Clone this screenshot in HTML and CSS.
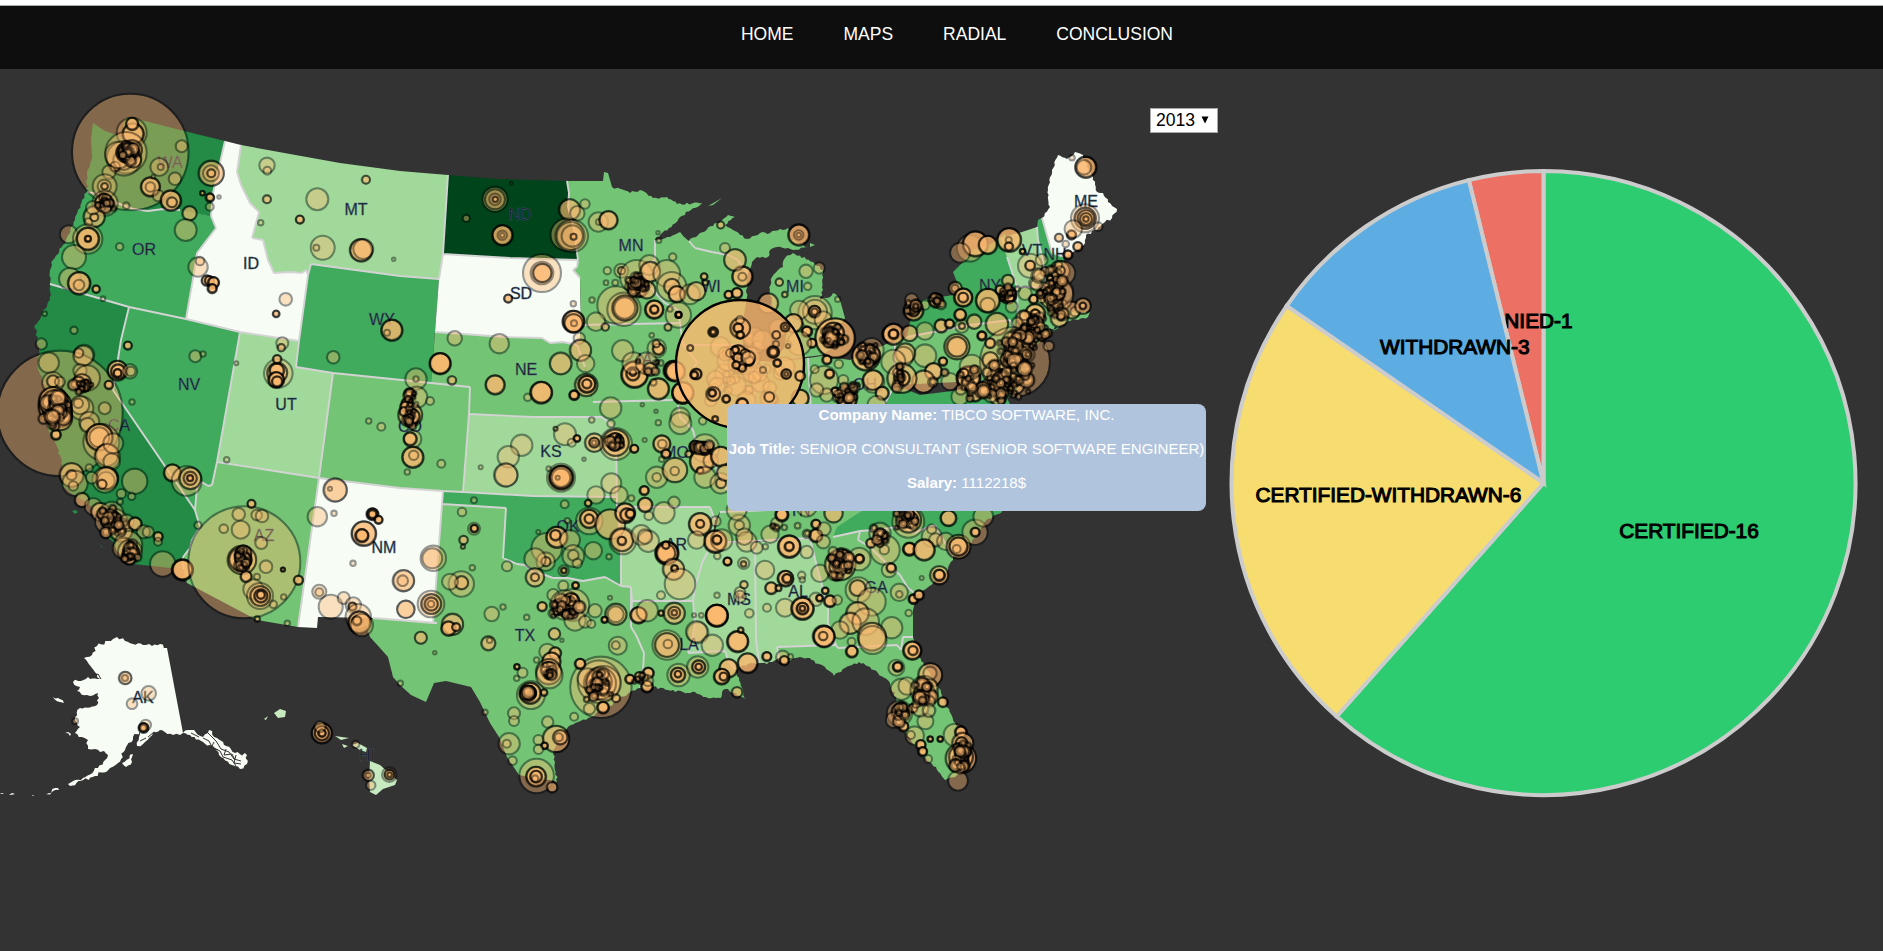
FILE: index.html
```html
<!DOCTYPE html>
<html lang="en">
<head>
<meta charset="utf-8">
<title>Maps</title>
<link rel="stylesheet" href="styles.css">
</head>
<body>
<header class="topbar">
  <nav class="nav"><a>HOME</a><a>MAPS</a><a>RADIAL</a><a>CONCLUSION</a></nav>
</header>
<main class="content">
  <svg class="map" viewBox="0 69 1150 882" width="1150" height="882">
    <g id="states" class="states"></g>
    <g id="labels" class="labels"></g>
    <g id="circles" class="circles"></g>
    <g id="active"></g>
  </svg>
  <div class="picker"><div class="select"><span>2013</span><svg width="8" height="8" viewBox="0 0 8 8"><path d="M0.5 0.5h7L4 7.5z"/></svg></div></div>
  <svg class="pie" viewBox="1218 69 665 882" width="665" height="882">
    <path class="slice" fill="#2ecc71" d="M1543.5 483V171A312 312 0 1 1 1336.6 716.5Z"/>
    <text x="1689" y="537.5">CERTIFIED-16</text>
    <path class="slice" fill="#ec7063" d="M1543.5 483L1468.8 180.1A312 312 0 0 1 1543.5 171Z"/>
    <text x="1524" y="328">DENIED-1</text>
    <path class="slice" fill="#f7dc6f" d="M1543.5 483L1336.6 716.5A312 312 0 0 1 1286.7 305.8Z"/>
    <path class="slice" fill="#5dade2" d="M1543.5 483L1286.7 305.8A312 312 0 0 1 1468.8 180.1Z"/>
    <text x="1388.4" y="502">CERTIFIED-WITHDRAWN-6</text>
    <text x="1454.8" y="354">WITHDRAWN-3</text>
  </svg>
  <div class="tooltip">
    <p><strong>Company Name:</strong> TIBCO SOFTWARE, INC.</p>
    <p><strong>Job Title:</strong> SENIOR CONSULTANT (SENIOR SOFTWARE ENGINEER)</p>
    <p><strong>Salary:</strong> 1112218$</p>
  </div>
</main>
<script src="map.js"></script>
</body>
</html>
```
FILE: styles.css
```css
* { box-sizing: border-box; }
body {
  margin: 0;
  padding-top: 5px;
  height: 951px;
  overflow: hidden;
  background: #fff;
  font-family: "Liberation Sans", Arial, sans-serif;
}
.topbar {
  height: 64px;
  background: #0e0e0e;
  border-top: 1px solid #a3aca6;
  padding: 18px 0 0 31px;
}
.nav {
  display: flex;
  justify-content: center;
  gap: 50px;
  font-size: 17.5px;
  line-height: 20px;
  color: #fff;
}
.content {
  position: relative;
  display: grid;
  grid-template-columns: 1150px 68px 665px;
  height: 882px;
  background: #333;
}
.map, .pie { display: block; }
.picker { padding-top: 39px; }
.select {
  display: flex;
  align-items: center;
  justify-content: space-between;
  height: 25px;
  padding: 0 8px 1px 5px;
  border: 1px solid #a9a9a9;
  background: #fff;
  color: #000;
  font-size: 17.6px;
}
.states path { stroke: none; }
.states .border { fill: none; stroke: #d3d3d3; stroke-width: 1.9; stroke-linejoin: round; }
.states .channel { fill: none; stroke: #333; stroke-width: 1; }
.labels { font-size: 16px; text-anchor: middle; fill: #10141c; stroke: #45607c; stroke-width: .45; }
.circles circle { fill: #fdb96f; stroke: #000; stroke-width: 2.1; opacity: .4; }
.circles .dense { stroke-width: 2.4; opacity: .44; }
.active { fill: #fdb96f; stroke: #000; stroke-width: 2.4; fill-opacity: .8; }
.slice { stroke: #ccc; stroke-width: 4; }
.pie text { font-size: 20.8px; text-anchor: middle; fill: #000; stroke: #000; stroke-width: 1.1; }
.tooltip {
  position: absolute;
  left: 727px;
  top: 335px;
  width: 479px;
  height: 107px;
  border-radius: 8px;
  background: #b0c4de;
  color: #fff;
  font-size: 15.06px;
  line-height: 17px;
  text-align: center;
  white-space: nowrap;
}
.tooltip p { margin: 2px 0 17px; }
.tooltip p + p { margin-top: 0; }
```
FILE: map.js
```js
const NS = 'http://www.w3.org/2000/svg';
const C = { w: '#f7fcf5', a: '#c7e9c0', b: '#a1d99b', c: '#74c476', d: '#41ab5d', e: '#238b45', f: '#00441b' };

// State outlines: shade key, then polygon points.
const states = [
  ['e', '93,123 105,131 117,135 121,138 125,118 133,118 188,132 225,141 213,193 211,216 197,214 180,210 163,209 148,211 133,209 117,203 103,195 87,192 87,173 92,157 91,140 92,130'],
  ['d', '87,192 103,195 117,203 133,209 148,211 163,209 180,210 211,216 216,228 197,253 194,273 186,319 129,307 50,284 50,270 53,260 63,245 75,220 82,200'],
  ['w', '225,141 241,145 237,172 241,185 250,203 259,212 255,227 252,238 263,240 268,260 274,273 290,272 302,273 306,270 308,275 299,341 240,332 186,319 194,273 197,253 216,228 211,216 213,193'],
  ['b', '241,145 290,154 340,163 400,171 448,175 443,254 439,279 400,276 311,264 308,275 306,270 302,273 290,272 274,273 268,260 263,240 252,238 255,227 259,212 250,203 241,185 237,172'],
  ['d', '311,264 400,276 439,279 431,383 333,373 296,367 299,341 308,275'],
  ['f', '448,175 497,179 567,181 569,193 568,207 575,233 576,245 578,260 510,258 443,254'],
  ['w', '443,254 510,258 578,260 577,267 573,270 580,278 581,323 580,337 577,345 563,342 550,343 542,338 505,337 435,332 439,279'],
  ['c', '435,332 505,337 542,338 550,343 563,342 577,345 585,367 592,398 602,417 533,417 469,414 470,387 431,383'],
  ['b', '469,414 533,417 602,417 612,425 612,430 616,433 617,497 533,496 463,492'],
  ['c', '333,373 431,383 470,387 469,414 463,492 443,491 400,488 319,478'],
  ['b', '240,332 299,341 296,367 333,373 319,478 217,462'],
  ['d', '129,307 186,319 240,332 217,462 212,485 208,486 202,482 197,487 195,510 113,390 121,340'],
  ['e', '50,284 129,307 121,340 113,390 195,510 200,527 192,540 190,548 183,557 185,562 180,569 133,564 120,555 105,530 92,507 63,487 62,460 50,433 40,400 47,390 38,370 39,350 35,325 50,300'],
  ['c', '217,462 319,478 298,627 257,620 187,583 183,569 183,557 190,548 192,540 200,527 195,510 197,487 202,482 208,486 212,485'],
  ['w', '319,478 400,488 443,491 442,504 433,623 373,618 318,617 317,628 298,627'],
  ['c', '442,504 506,508 503,558 517,564 525,565 533,572 545,575 553,578 568,578 583,581 605,577 621,586 631,587 632,601 631,627 636,635 644,653 643,670 640,688 630,692 610,706 591,717 578,722 568,727 557,740 553,754 555,762 557,782 549,780 535,778 519,775 507,757 499,737 490,723 480,702 471,687 446,681 434,683 426,702 411,695 400,685 393,677 388,657 380,648 370,637 366,625 373,618 433,623'],
  ['d', '443,491 463,492 533,496 617,497 617,507 621,543 621,586 605,577 583,581 568,578 553,578 545,575 533,572 525,565 517,564 503,558 506,508 442,504'],
  ['c', '567,181 603,181 604,172 608,173 612,187 630,193 640,190 653,198 667,197 677,204 702,203 680,217 669,228 655,240 655,260 645,265 648,285 665,303 678,310 680,323 581,325 580,278 573,270 577,267 578,260 576,245 575,233 568,207 569,193'],
  ['c', '655,240 670,237 680,232 689,241 695,248 712,252 728,255 738,260 742,267 748,273 747,297 744,315 743,345 683,345 680,323 678,310 665,303 648,285 645,265 655,260'],
  ['c', '689,241 700,233 717,223 728,215 735,217 725,225 733,230 747,239 760,233 770,233 788,228 791,240 798,243 807,247 793,250 777,247 770,250 768,257 757,257 752,262 748,273 742,267 738,260 728,255 712,252 695,248'],
  ['c', '793,253 813,262 823,270 823,290 820,300 827,298 833,293 840,300 845,318 838,328 834,347 822,355 806,357 773,362 784,348 787,330 783,315 771,305 770,290 772,277 778,270 783,267 785,258'],
  ['c', '581,325 680,323 683,345 697,362 688,380 678,403 673,400 593,402 585,367 577,345 580,337'],
  ['c', '593,402 673,400 678,405 680,417 693,430 697,446 712,460 727,490 727,502 720,512 715,520 710,507 617,507 616,433 612,430 612,425 602,417'],
  ['c', '683,345 743,345 752,360 756,430 745,470 727,490 712,460 697,446 693,430 680,417 678,405 688,380 697,362'],
  ['c', '752,360 773,362 808,358 812,430 780,460 745,470 756,430'],
  ['c', '808,358 822,356 850,360 880,347 895,340 895,385 870,430 840,440 812,430'],
  ['c', '727,490 745,470 780,460 812,430 840,440 860,470 900,505 720,512'],
  ['c', '720,512 900,505 860,531 833,537 712,543'],
  ['b', '617,507 710,507 715,520 712,543 702,563 695,587 693,601 632,601 631,587 621,586 621,543'],
  ['c', '632,601 693,601 695,623 692,640 688,653 725,651 728,660 735,670 739,678 742,688 746,700 737,695 728,689 723,690 721,698 706,697 695,692 683,692 668,690 653,687 640,688 643,670 644,653 636,635 631,627'],
  ['b', '712,543 755,542 756,640 759,663 748,664 735,670 728,660 725,651 688,653 692,640 695,623 693,601 695,587 702,563'],
  ['b', '755,542 810,538 817,567 828,607 828,623 836,645 777,647 779,658 767,664 759,663 756,640'],
  ['c', '810,538 860,531 858,540 870,547 883,560 900,575 908,588 917,595 913,610 913,637 903,637 901,650 897,645 838,648 836,645 828,623 828,607 817,567'],
  ['c', '777,647 836,645 838,648 897,645 901,650 903,637 913,637 919,657 930,673 941,693 955,723 966,747 966,763 955,777 945,780 936,767 924,757 909,737 901,727 894,717 897,703 890,683 874,670 859,662 845,668 834,676 825,667 807,658 795,658 783,663 779,658'],
  ['c', '860,531 875,530 905,526 913,533 935,525 953,557 948,570 935,580 927,588 917,595 908,588 900,575 883,560 870,547 858,540'],
  ['d', '833,537 837,527 860,512 880,500 1000,500 1002,512 985,522 975,538 965,548 953,557 935,525 913,533 905,526 875,530 860,531'],
  ['d', '895,385 920,395 1000,385 1010,404 1000,450 1005,500 900,505 860,470 840,440 870,430'],
  ['c', '895,340 907,337 970,325 1010,320 1020,340 1015,365 1000,380 895,385'],
  ['d', '907,337 910,322 923,300 953,295 960,290 953,272 963,262 973,250 993,243 1005,233 1007,257 1017,287 1018,325 1030,340 1055,330 1060,325 1035,345 1020,340 1010,320 970,325'],
  ['d', '1020,340 1030,345 1028,370 1018,390 1000,404 1000,380 1015,365'],
  ['b', '1000,238 1022,232 1037,227 1038,240 1043,260 1046,287 1017,287 1007,257'],
  ['d', '1037,227 1038,220 1042,218 1052,253 1065,257 1060,285 1046,287 1043,260 1038,240'],
  ['c', '1017,287 1046,287 1060,285 1062,300 1072,312 1090,312 1088,317 1068,321 1040,335 1030,338 1018,325'],
  ['w', '1042,218 1050,207 1048,190 1052,170 1058,155 1067,159 1075,152 1083,155 1093,177 1097,192 1103,193 1108,202 1117,209 1112,218 1105,222 1097,230 1086,235 1085,243 1073,252 1065,257 1052,253']
];
// Outlying land without visible borders.
const islands = [
  ['c', '708,206 722,198 713,205'], ['c', '810,243 815,245 810,247'], ['e', '72,511 78,512 75,514'], ['e', '100,544 103,549'], ['d', '1055,330 1064,323 1049,334'],
  ['w', '108,641 113,639 117,637 125,641 133,644 143,645 152,646 160,644 167,648 183,733 180,735 173,735 160,730 153,733 150,737 145,742 137,746 139,737 140,731 133,737 125,750 118,763 110,768 95,776 70,786 68,784 83,778 98,768 108,755 104,751 100,752 95,749 88,749 88,740 82,737 75,733 80,727 75,720 80,708 97,705 98,693 87,695 77,691 80,687 73,682 88,677 100,679 97,674 92,668 84,658 92,655 97,646'],
  ['w', '183,733 191,730 203,737 209,730 217,738 226,746 235,753 247,755 247,764 240,769 232,765 219,755 210,745 203,742 190,735'],
  ['w', '53,697 58,698 64,703 60,702'], ['w', '65,733 71,734 70,736'], ['w', '122,763 133,754 132,762 126,767'], ['w', '43,795 58,788 59,790 45,795'], ['w', '0,793 4,793 2,794'], ['w', '12,793 15,794 9,795'], ['w', '32,795 34,795 33,796'],
  ['a', '274,713 280,709 286,711 285,717 278,718'], ['a', '264,719 268,716 266,720'], ['a', '335,736 349,738 341,740'], ['a', '342,744 348,746 344,748'], ['a', '352,745 358,743 367,748 366,752 360,750'], ['a', '370,761 380,765 397,780 395,785 383,789 376,795 370,792 369,778']
];
const el = (name, attrs, parent) => {
  const n = document.createElementNS(NS, name);
  for (const k in attrs) n.setAttribute(k, attrs[k]);
  parent.appendChild(n);
  return n;
};
const gs = document.getElementById('states');
let seed = 7;
const rnd = () => (seed = (seed * 16807) % 2147483647) / 2147483647;

// Count how often an edge is used: an edge used twice is an inner border.
const uses = {};
const key = (a, b) => (a < b ? a + '|' + b : b + '|' + a);
states.forEach(([, p]) => {
  const pts = p.split(' ');
  pts.forEach((a, i) => { const k = key(a, pts[(i + 1) % pts.length]); uses[k] = (uses[k] || 0) + 1; });
});
// Coast edges get small inlets.
const coastal = (x, y) => (x < 130 && y > 150 && y < 560) || (y > 640 && x > 550) || (x > 605 && x < 850 && y > 186 && y < 300) || (x > 1040 && y < 340) || (x > 918 && y > 515);
const outline = (p, island) => {
  const pts = p.split(' ');
  let d = '';
  pts.forEach((a, i) => {
    const b = pts[(i + 1) % pts.length];
    const [ax, ay] = a.split(',').map(Number);
    const [bx, by] = b.split(',').map(Number);
    d += (i ? 'L' : 'M') + a;
    const len = Math.hypot(bx - ax, by - ay);
    const rough = island ? len < 50 && bx < 260 : uses[key(a, b)] === 1 && coastal((ax + bx) / 2, (ay + by) / 2);
    if (!rough || len < 4) return;
    const n = Math.floor(len / 2.4);
    const amp = island ? 3.4 : 2.4;
    for (let k = 1; k < n; k++) {
      const j = (rnd() - .5) * amp;
      d += 'L' + (ax + (bx - ax) * k / n - (by - ay) / len * j).toFixed(1) + ',' + (ay + (by - ay) * k / n + (bx - ax) / len * j).toFixed(1);
    }
  });
  return d + 'Z';
};
states.forEach(([k, p]) => el('path', { d: outline(p, false), fill: C[k] }, gs));
islands.forEach(([k, p]) => el('path', { d: outline(p, true), fill: C[k] }, gs));
el('path', { class: 'channel', d: 'M203 738l6 3 3 6 8 4 3 6 9 3 4 6M208 733l8 8 5 8 8 3 5 7 7 2M214 742l-3 6 7 2M226 749l-2 6 8-1 3 6M236 755l-2 8 7 1M93 677l5-3 3 5M148 737l6-5 3 2M140 741l6-3M191 733l8 4' }, gs);

const drawn = {};
let shared = '';
states.forEach(([, p]) => {
  const pts = p.split(' ');
  pts.forEach((a, i) => {
    const b = pts[(i + 1) % pts.length];
    const k = key(a, b);
    if (uses[k] > 1 && !drawn[k]) { shared += 'M' + a + 'L' + b; drawn[k] = 1; }
  });
});
shared += 'M183,557L183,569M810,538L712,543M616,433L617,507L710,507M631,587L631,627M437,623L373,618';
el('path', { d: shared, class: 'border' }, gs);

const gl = document.getElementById('labels');
'WA 170 168,OR 144 255,ID 251 269,MT 356 215,WY 382 325,ND 520 220,MN 631 251,SD 521 299,WI 711 292,MI 795 292,NE 526 375,NV 189 390,UT 286 410,CA 119 431,KS 551 457,CO 410 432,IA 645 365,MO 676 458,OK 568 532,AR 676 550,MS 739 605,TX 525 641,LA 689 650,AL 798 597,GA 876 593,NM 384 553,AZ 264 541,AK 143 703,HI 367 761,ME 1086 207,VT 1032 256,NH 1055 260,NY 990 291,TN 800 516,OH 865 390'
  .split(',').forEach(s => { const [t, x, y] = s.split(' '); el('text', { x, y }, gl).textContent = t; });

const gc = document.getElementById('circles');
const dot = (x, y, r, cls) => {
  const a = { cx: x.toFixed(1), cy: y.toFixed(1), r: r.toFixed(1) };
  if (cls) a.class = cls;
  el('circle', a, gc);
};

// Each panel: origin, horizontal scale, then "x y radius [stack]" entries in panel units.
const panels = [
  [0, 60, 3, '391 276 175,395 218 45,399 222 32 3,396 192 19 3,378 278 62,372 295 52,395 270 30 2,400 300 23 2,345 320 15 3,370 300 30,355 285 40,327 336 20,314 379 36,313 379 20,313 379 10 2,378 278 30 3,378 278 15 2,478 321 27,482 321 9,545 259 18,451 381 29 3,451 381 14,460 350 6,525 356 19,475 407 17,512 422 31 3,515 427 15 2,568 460 22 2,557 510 33,379 437 10,633 340 38 2,633 340 24,633 340 12 2,607 400 7 3,629 413 13 4,657 411 5,629 440 12,315 430 38,311 430 28 3,311 430 12 3,282 470 32 2,282 472 12 2,265 487 12,278 443 20,206 523 27,263 537 44,263 537 34 3,263 537 9 4,222 591 36,359 560 11,210 656 33,237 670 34 3,237 675 16,288 688 11 3,309 716 7,594 621 29,600 603 13,620 662 16 3,628 662 14 3,640 668 17 4,636 686 14 4,857 718 19,828 762 10 3,801 316 23,802 332 12,800 418 12 2,782 488 8,952 418 33,968 563 36,949 563 9,1083 571 34 3,1090 567 30,1181 598 5,899 479 12 3,1097 359 12 2,1175 811 32 3,1161 818 9,134 761 7,222 811 11,124 852 17,252 885 31,237 880 12,383 857 12 3,586 889 18,609 882 8,847 850 18,843 863 11 2,1000 892 19'],
  [400, 60, 3, '285 418 38,285 418 30,285 418 17,285 418 8 2,334 370 4,199 475 11,307 526 31 3,307 526 14,307 526 7,426 639 57,426 639 34,426 639 28 2,324 716 12 3,508 449 32 2,532 460 22,555 432 14,500 524 49,515 528 49,512 528 42,517 528 32,520 530 9 2,595 486 29,597 486 9,625 481 28 3,774 518 5,776 541 8,622 632 11,664 632 21,664 632 11 2,618 668 7,646 668 9,648 735 56,672 748 50,674 744 38 2,674 744 32,710 650 50,715 680 32 2,710 660 17 3,720 690 20 3,748 615 30,750 635 30 2,800 640 40,815 680 44,815 680 24 2,830 703 25 3,870 703 30,888 694 28 2,912 650 10 3,915 668 8 2,818 591 11,762 749 28 4,762 749 13 4,740 690 26 2,835 765 38,835 765 9 4,810 747 8,804 802 9,520 785 33 4,520 790 28 2,522 790 9,520 731 8,588 785 28,615 801 11 2,576 720 8,755 826 7,668 872 32,770 865 28,775 868 17 3,768 851 11 2,164 835 22,298 851 29,538 835 17,541 871 32 2,482 910 33,120 910 30 2,1005 600 33,1027 650 31 3,1027 650 12,975 564 15,962 495 10,1103 730 30,1138 666 11,1155 703 8,985 705 12 4,1010 700 16 4'],
  [0, 340, 3, '180 220 188,146 68 31,250 47 30,236 39 14,240 92 20,262 114 38,158 128 32,158 124 18 2,180 125 15,245 130 28 2,235 130 20 2,255 137 18 3,352 92 30 3,354 95 22 3,352 100 12 4,326 135 13 3,390 94 22,392 94 14,396 186 8,314 205 18,245 205 35,240 195 28,235 190 14,268 245 30,262 255 22,165 200 50 3,172 215 44 3,178 225 38 3,180 235 36 2,160 185 44 3,162 184 34 2,162 184 20,167 285 15 4,304 305 54,298 292 40 3,298 292 30,320 345 34 2,322 350 38,340 310 30,335 365 25,214 405 36 2,214 405 15 2,225 430 38,220 438 14,320 415 34 3,318 422 26,315 420 38,305 433 14 2,268 384 11,275 413 18,404 424 38,364 461 14,395 469 11,245 480 22 2,280 500 26,300 516 28 2,335 520 35,345 545 38,320 545 35,362 570 35 2,330 540 28,340 525 14 3,380 545 22,360 572 18,405 552 20 3,430 575 20,445 576 17,474 590 14 3,474 605 12,385 615 42,370 625 32,390 635 36,393 640 26 3,388 655 20 3,317 586 8,360 485 9,488 672 38,547 690 32 5,517 399 26 3,560 423 45,570 415 33 2,570 415 20 2,570 415 9 3,594 556 11,733 667 168,716 523 19,754 492 12 3,770 525 16,786 528 19,671 566 13,722 569 27,784 609 18,798 680 19,848 689 6 4,725 660 43 2,720 658 34 2,730 640 24 3,730 660 24 3,738 710 17 3,771 710 9,895 721 14 3,760 748 30,780 768 39,780 768 30 2,782 768 20 3,782 765 12 3,820 793 11,851 771 8,771 837 8 2,862 850 8,680 359 8,835 100 43,831 98 30 2,830 92 22 3,828 120 24 4,831 125 16 3,831 58 13 3,709 70 6,1106 243 8,1144 260 12,1005 450 35 2,990 446 6,952 530 29,1002 520 8,1117 523 18 5,1117 523 12 3,1135 540 12 4,1091 581 37 3,1085 587 20 4,1059 670 8,958 755 21,958 757 12,992 800 36,1031 774 18,1060 795 23,1057 800 12 3,1075 830 38,1078 848 34 3,1070 843 14 4,1085 855 34'],
  [400, 340, 3, '48 117 32,48 117 8,120 71 32 3,155 121 13 2,285 135 29 3,423 158 33 4,383 172 11,50 172 32,90 183 12,28 162 17 4,20 190 16 4,30 225 36 2,32 240 20 5,35 230 24 3,16 200 16 4,12 215 14 3,38 297 26,30 297 20 3,38 352 32 3,41 346 14,22 396 8,124 371 12,522 166 15 5,558 135 34 2,560 133 26 4,560 132 14 3,482 71 32,557 71 26,632 204 32,575 240 8,633 251 11,703 104 40 4,698 102 20 3,698 98 10 3,700 70 33,740 70 33,750 88 20 2,775 147 32 3,760 127 10,820 92 30 5,820 95 20,848 160 32 3,727 194 5,768 214 5,775 248 8,841 232 29,841 250 33,908 243 11,495 283 33,466 266 6 2,530 296 10 4,515 308 12,582 308 28 2,582 308 15 3,582 308 7,648 312 48,646 308 40 2,645 305 26 4,650 310 16 3,702 327 12 4,734 300 6,785 312 26 3,787 312 13,797 342 14 4,785 358 8,552 358 5,365 316 32,325 350 32,317 405 35 2,242 382 6,483 413 42,483 413 36 5,483 413 28,473 413 6,446 386 7,770 412 32,770 412 13,824 390 37 2,824 393 13,915 325 42,905 365 36 3,885 320 18 5,910 325 20 5,925 322 14 4,932 362 22,865 342 10 2,900 392 10 3,915 412 32,962 430 31,962 430 15 2,962 350 30 3,975 398 25 2,732 452 14 4,694 475 9,634 430 30,657 465 26,588 465 26,564 490 10 3,494 493 12,222 481 9,186 516 13,222 566 18,222 566 11 4,190 600 13 2,188 620 6 2,502 542 8,415 576 6,568 543 40,567 537 28 3,567 537 14 3,630 553 45 2,675 520 30 3,680 525 20 3,690 522 14 4,668 603 40,665 600 34 2,665 603 13 3,724 585 30,745 604 32,735 590 22,792 518 32,822 487 17,735 495 22 3,746 527 13,440 625 46,470 592 32 3,466 586 16 3,510 600 30,520 648 33,520 646 16,437 665 28,437 665 14 2,405 657 32,580 632 26,627 650 8,532 670 14,491 692 16,491 692 8 3,404 712 28 2,404 712 12 2,321 679 15,490 737 15,526 737 10 4,100 655 38,97 655 30,217 683 8,184 732 38,184 728 20 2,150 725 24,10 722 32 2,8 722 16,93 792 40,93 792 30 2,93 792 20 2,93 792 10,18 808 26,275 822 22,309 801 8,380 832 8,157 853 32 2,145 866 22 3,168 862 12 3,62 893 18,463 881 17,265 910 22,426 800 14 3,460 765 18,520 795 48,495 795 44,480 800 24 3,512 785 26 3,512 785 14 3,478 805 12 3,525 840 32,555 845 18,574 852 12,585 812 20,647 823 32 2,647 823 24,630 773 6,613 840 9 4,715 826 25 4,742 812 32,783 820 8 3,822 820 32 2,822 818 18 2,822 818 8 2,783 766 12,800 640 35 5,797 640 28 2,797 616 11 3,820 688 32 2,823 686 10 4,840 732 46,900 553 34 3,900 552 12 3,945 605 34 4,965 600 32,950 600 14 4,890 600 26,947 544 15,952 648 10,982 665 12 5,950 827 33 4,950 827 33 3,1031 670 17,1030 672 8 2,1048 820 13,904 826 7,882 826 6,1031 734 11 2,1020 757 16,951 766 8,893 878 32'],
  [700, 340, 3, '118 556 32,118 556 14,140 605 30,133 590 25,170 623 18,196 620 8,210 583 26,230 550 17,267 620 34 4,267 620 14 4,320 636 19,195 690 28,256 716 24 4,260 716 14 4,213 745 18 3,235 745 9 3,305 706 11,307 719 8,201 803 12,255 803 27,307 806 34 4,307 806 18 4,307 806 8 3,348 778 20,358 775 10 4,389 784 18 4,412 780 14,375 753 10 4,347 553 14 4,347 587 20 4,372 567 20,370 605 20,360 700 26,420 675 46 2,425 660 35 2,415 680 28 2,408 710 13 4,430 645 16 3,478 657 34,478 657 14 5,555 630 44,553 629 14,540 580 32,540 585 20 4,512 610 14 3,625 545 48,625 540 38 2,630 540 24 3,628 525 14 3,695 590 30,707 600 20,628 628 20 5,672 630 32 3,695 567 14,737 604 26,775 620 36 2,775 620 28 3,770 627 12,825 577 38,825 577 14 4,745 535 24 3,850 530 30,717 706 28 2,717 706 17 4,567 690 22,573 684 14 3,665 714 6,598 757 26,598 763 10,640 778 15 5,656 766 15 4,626 819 10,475 750 38,472 744 24 2,515 785 42,472 820 34 2,450 850 32 2,497 845 40,575 863 32,515 890 42 2,420 870 26,370 888 32 2,120 770 18,245 525 20 5,320 500 30,400 520 28 2,110 510 30'],
  [0, 600, 3, '375 234 19 2,375 234 9,446 280 22,396 311 16,225 364 9,437 375 16,430 384 15 5,430 384 9,965 400 31 3,965 400 22 3,965 400 11 4,960 380 17,1067 433 11,1104 526 17 2,1104 526 8,1112 556 14,1168 524 22,1168 524 15 3,1168 524 7 2,1217 28 26,1201 250 8'],
  [400, 560, 2.613, '55 233 18,91 278 5,231 250 20,234 241 8,404 222 17,423 241 5,569 257 27,564 256 12,385 275 24,405 280 18 3,395 305 28 3,388 335 38 2,388 330 24 4,390 345 40,357 300 8,305 321 8 4,305 355 8,320 338 15,342 405 42,340 400 32 3,338 398 20 5,376 398 10 3,525 382 92,520 365 64,522 370 48 2,520 365 38 2,525 380 26 4,510 380 16 3,470 312 16 4,490 355 30,532 370 52,530 443 18 4,495 446 17,487 418 8 2,564 415 12 2,222 457 8,298 460 18,298 483 15,386 486 17,455 470 12,285 551 32,279 551 12,294 602 13,407 537 40 2,418 532 22 2,415 532 12,362 540 15,377 558 10 4,362 568 14,357 648 52,355 650 30 3,355 650 18 3,353 656 10,397 682 16 2,600 358 14 4,625 350 14 3,648 340 17 4,645 380 18 4,648 362 16,698 255 44,697 255 36 2,700 252 13,728 345 34,726 345 22 3,726 343 10 3,778 321 32,780 321 20 3,780 321 10 3,775 215 32,816 256 32,882 245 32 4,908 310 30 3,858 325 28 3,840 350 24 4,845 350 12 3,880 397 16 2,890 211 8 3,958 290 14 4,1000 292 20,1004 302 14 3,1020 290 8,1108 230 32 3,1105 228 13 2,1180 275 18 4,1180 245 12,1235 240 42,1338 272 28 4,1340 272 14 3,1297 323 24,1300 321 15 5,1385 345 36 2,1385 340 20,1310 388 32,1325 378 26,1370 390 42,1370 400 32 2,1365 410 18 4,1418 427 15 3,1340 445 14 4,1305 460 38,1305 455 24 3,1315 455 12 5,1315 500 15 4,1290 480 24,1373 484 24,1385 538 8 4,1411 538 8 4,1345 527 28,1335 525 12,1360 555 15 4,1365 575 14 4,1380 597 12,1450 525 34,1465 517 18 4,1470 550 32 2,1467 550 18 3,1465 595 46 2,1465 590 36 2,1468 602 20 4,1470 575 24 3,1458 662 30'],
  [660, 210, 3, '182 45 11,416 75 32 3,416 75 14,416 75 7,225 150 32,438 184 20,478 174 17,358 217 11,443 229 11,374 254 8,325 280 30,465 308 50,465 305 36,463 305 18 4,463 305 10 2,418 300 28,490 330 26,533 268 8,525 385 60 3,520 370 32 3,515 385 28 3,520 375 18 3,500 450 14 4,440 365 16 5,455 400 14 4,418 400 36,400 340 28 3,617 440 42 3,625 435 28 2,630 440 16 4,536 462 13,492 510 42,508 492 14 4,464 478 12,550 510 15,583 532 17,560 568 30 4,525 545 12 5,640 515 33,500 555 20,470 540 20,690 373 24 3,420 565 26 3,45 485 30 4,68 548 32 3,55 315 9 4,24 352 11,355 355 28'],
  [860, 210, 3, '330 115 40,346 102 38 3,383 105 28 3,300 128 30,447 90 36 3,446 90 9,446 110 13 3,510 167 36,510 167 15 3,545 150 18,487 125 8 4,599 182 30 2,610 190 36,600 182 14 2,623 135 14 4,596 83 12 2,634 75 14 4,653 110 14 3,617 102 10,675 25 42,675 25 32 2,677 25 25 2,677 27 18 2,677 27 8 2,640 57 26,285 235 20 2,285 235 11,309 263 28 4,309 263 15 3,228 272 22 4,160 302 30 3,160 302 18 4,155 270 20,195 285 14,100 373 32 3,100 373 15 5,148 370 24 2,195 363 26,243 348 20 3,268 342 14 4,305 348 20,305 348 9 2,300 315 18 4,342 335 22 2,383 272 36 3,383 285 22,410 342 34 2,443 212 18 2,443 255 26 4,447 262 16 4,420 240 14 3,455 290 18,290 410 38 2,290 410 30 2,195 437 34,135 430 30 2,130 440 30,100 455 36,35 420 36,28 435 32 3,35 452 14 4,220 485 26 3,190 515 34 2,125 505 44 2,125 505 24 3,38 510 30 2,66 550 20 3,50 585 28,270 515 26,325 505 36 5,335 470 36,312 490 14 3,465 455 105,485 390 44,470 410 36 2,470 415 20 3,390 400 15 3,365 378 14 5,390 450 24 2,410 490 38,420 490 14 4,465 525 28 2,440 490 34,440 450 20 3,520 355 18 3,545 380 14 4,525 312 30 3,525 312 14 4,575 255 38,580 260 24 2,575 260 14 2,600 245 40,600 290 24 2,597 325 26 2,635 300 26 2,645 305 14,668 288 24 2,668 288 10 3,520 268 14 4,525 220 18,555 185 14 3,570 207 10 4,495 250 20,590 255 50,413 560 26 2,345 555 20 3,300 560 26,248 455 13 4'],
  [800, 60, 3, '857 322 32 3,852 322 22,816 293 8,895 500 13']
];
panels.forEach(([ox, oy, sx, list]) => list.split(',').forEach(s => {
  const [x, y, r, n = 1] = s.split(' ').map(Number);
  for (let i = 0; i < n; i++) dot(ox + x / sx + (i % 2) * .5, oy + y / 3 - (i > 1 ? .4 : 0), Math.max(1.4, r / 3 - i * (r > 12 ? .25 : .1)));
}));

// Dense metro areas: centre, spread, count, radius range. Each record has a few rings on one spot.
const cluster = (x, y, sx, sy, n, a, b) => {
  for (let i = 0; i < n; i++) {
    const cx = x + (rnd() + rnd() - 1) * sx, cy = y + (rnd() + rnd() - 1) * sy, r = a + rnd() * rnd() * (b - a);
    dot(cx, cy, r, 'dense');
    if (i % 3) dot(cx + .4, cy - .4, Math.max(1.4, r - 1.4), 'dense');
    if (i % 3 === 2) dot(cx, cy, r + .9, 'dense');
  }
};
[
  [1052, 292, 18, 30, 52, 2, 9], [1032, 330, 20, 20, 55, 2, 9], [1015, 350, 20, 22, 55, 2, 10], [1008, 382, 24, 20, 55, 2, 10],
  [965, 382, 42, 24, 22, 2, 9], [900, 378, 8, 14, 14, 2, 9], [1008, 295, 10, 12, 12, 2, 6], [912, 308, 9, 9, 12, 2, 6], [936, 301, 7, 7, 9, 2, 5],
  [848, 395, 16, 12, 26, 2, 6], [833, 337, 12, 12, 26, 2, 7], [867, 357, 12, 14, 22, 2, 8], [908, 520, 14, 14, 18, 2, 6], [880, 535, 8, 10, 10, 2, 5],
  [840, 562, 12, 18, 24, 2, 7], [566, 606, 16, 13, 34, 2, 7], [600, 685, 13, 16, 24, 2, 8],
  [55, 413, 16, 18, 26, 3, 9], [82, 385, 10, 8, 12, 2, 6], [112, 522, 17, 16, 30, 2, 7], [130, 552, 8, 10, 16, 2, 7], [128, 152, 9, 12, 30, 3, 8],
  [106, 203, 8, 6, 16, 2, 6], [411, 408, 6, 24, 20, 2, 6], [638, 284, 12, 11, 26, 2, 7], [702, 448, 12, 7, 16, 2, 6], [616, 443, 9, 9, 12, 2, 7],
  [961, 757, 8, 18, 22, 3, 9], [923, 695, 9, 18, 24, 3, 9], [901, 713, 6, 11, 14, 3, 6], [548, 670, 6, 14, 10, 2, 6], [530, 694, 6, 6, 12, 3, 7],
  [640, 680, 12, 9, 6, 2, 4], [243, 560, 7, 12, 20, 2, 7], [875, 500, 120, 12, 10, 2, 8], [780, 530, 50, 14, 5, 2, 5], [650, 362, 24, 16, 6, 2, 5]
].forEach(a => cluster(...a));
// Faded rings beneath the active circle.
for (let i = 0; i < 44; i++) dot(740 + (rnd() + rnd() - 1) * 52, 372 + (rnd() + rnd() - 1) * 50, 3 + rnd() * 9);

const ga = document.getElementById('active');
el('circle', { cx: 740, cy: 364, r: 64, class: 'active' }, ga);
// Neighbouring records that stay above the active one.
const over = el('g', { class: 'circles' }, ga);
'713 332 5 4,713 332 3 3,740 328 10 2,738 328 5 4,740 335 4 4,738 353 8 3,743 360 7 3,749 361 5 4,740 364 6 4,735 350 4 4,745 354 5 3,738 358 5 3,742 368 4 3,736 365 4 3,748 358 7 2,773 352 6 4,773 352 4 2,777 363 4 4,696 374 5.5 4,694 375 4 4,786 374 5 4,786 374 2 2,800 376 5 3,713 394 7 2,712 393 4 4,726 399 4 4,742 404 6 4,769 397 5 2,715 419 3 3,785 327 4.5 3,785 327 2 2,776 335 4 2,730 353 4 1,690 348 3 2,763 370 3 1,776 344 3 1,788 346 2 1,740 320 4 1'
  .split(',').forEach(s => {
    const [x, y, r, n] = s.split(' ').map(Number);
    for (let i = 0; i < n; i++) el('circle', { cx: x + (i % 2) * .5, cy: y, r: Math.max(1.2, r - i * .3) }, over);
  });
```
